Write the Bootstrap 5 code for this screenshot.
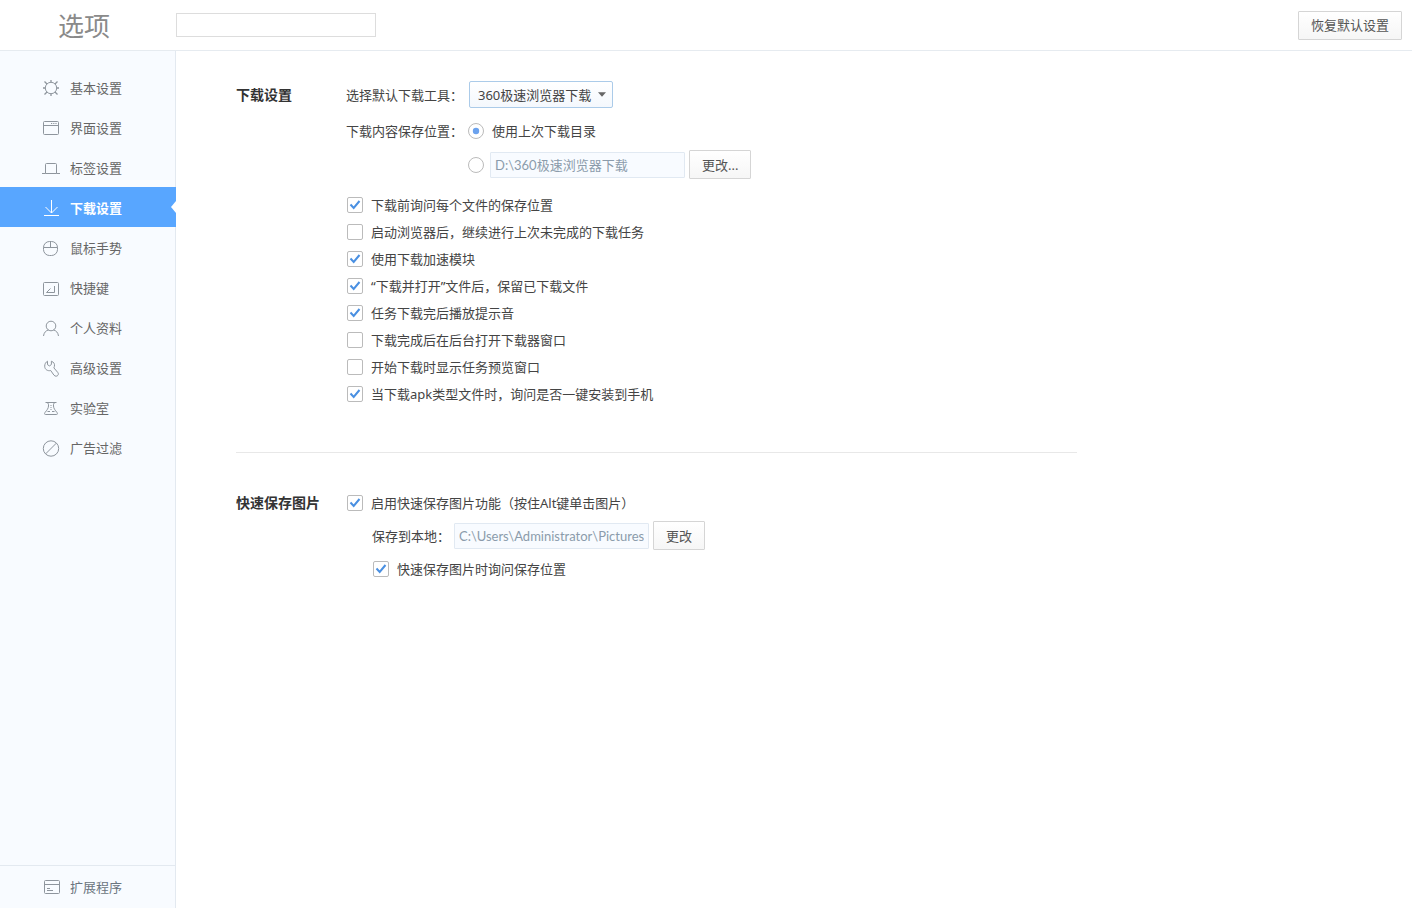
<!DOCTYPE html>
<html lang="zh-CN">
<head>
<meta charset="utf-8">
<meta name="viewport" content="width=device-width, initial-scale=1">
<title>选项</title>
<link href="https://cdn.jsdelivr.net/npm/bootstrap@5.3.0/dist/css/bootstrap.min.css" rel="stylesheet">
<style>
  body {
    font-family: "Noto Sans", "Noto Sans CJK SC", sans-serif;
    font-size: 13px;
    line-height: 20px;
    color: #444;
    background: #fff;
  }
  .top-bar { height: 51px; border-bottom: 1px solid #e6ebf0; padding-right: 10px; }
  .page-title { width: 176px; padding: 2px 0 0 58px; font-size: 26px; line-height: 40px; font-weight: 400; color: #8a8a8a; }
  .search-box { width: 200px; height: 24px; border: 1px solid #ddd; border-radius: 0; padding: 0 5px; font-size: 13px; }

  .side-bar { width: 176px; background: #f8fbff; border-right: 1px solid #e3e9f0; }
  .side-nav { padding-top: 16px; }
  .side-nav .nav-link, .side-foot .nav-link {
    display: flex; align-items: center; gap: 10px;
    height: 40px; padding: 2px 0 0 42px; color: #666; position: relative;
  }
  .side-nav .nav-link.active { background: #58a6ff; color: #fff; font-weight: 700; margin-right: -1px; }
  .side-nav .nav-link.active::after {
    content: ""; position: absolute; right: 0; top: 14px;
    border: 6px solid transparent; border-left-width: 0; border-right: 5px solid #fff;
  }
  .side-nav svg, .side-foot svg { width: 18px; height: 18px; fill: none; stroke: #8e959d; flex: none; }
  .side-nav .active svg { stroke: #fff; }
  .side-foot { border-top: 1px solid #e3e9f0; padding-bottom: 2px; }
  .side-foot .nav-link { color: #6b7580; }

  .settings { padding: 30px 24px 30px 60px; }
  .settings-inner { max-width: 841px; }
  .sect-title { width: 110px; font-size: 14px; line-height: 27px; font-weight: 700; margin: 0; color: #333; }
  .row-label { width: 123px; }
  .dir-line { line-height: 22px; }
  .split { border-top: 1px solid #e8e8e8; margin: 45px 0 36px; }

  .btn-plain {
    --bs-btn-color: #555; --bs-btn-border-color: #d5d5d5; --bs-btn-border-radius: 1px;
    --bs-btn-font-size: 13px; --bs-btn-line-height: 20px;
    --bs-btn-padding-x: 12px; --bs-btn-padding-y: 3px;
    --bs-btn-hover-border-color: #b5cfe8; --bs-btn-hover-color: #333;
    height: 29px; background: linear-gradient(#fff, #f6f6f6);
  }
  .tool-select {
    width: 144px; height: 27px; padding: 0 20px 0 8px;
    font-size: 13px; line-height: 20px; color: #444;
    border: 1px solid #abcbe9; border-radius: 2px;
    background: url("data:image/svg+xml,%3Csvg xmlns='http://www.w3.org/2000/svg' viewBox='0 0 9 5'%3E%3Cpath d='M0 0h9L4.500 5z' fill='%23666'/%3E%3C/svg%3E") right 6px center / 8px 5px no-repeat, linear-gradient(#fff, #f4f8fd);
  }
  .path-box {
    width: 195px; height: 26px; padding: 0 4px; font-size: 13px; line-height: 20px;
    font-family: Lato, "Noto Sans CJK SC", sans-serif;
    color: #8b9bab; border: 1px solid #e1e9f2; border-radius: 1px;
  }
  .path-box:disabled { background: #f8fbff; }

  .opt { display: flex; align-items: center; gap: 8px; min-height: 27px; padding: 0 0 0 1px; margin: 0; }
  .opt .form-check-input, .radio-line .form-check-input {
    width: 16px; height: 16px; margin: 0; float: none; flex: none;
    border: 1px solid #bbb; background-color: #fff;
  }
  .opt .form-check-input { border-radius: 2px; }
  .opt .form-check-input:checked {
    background-image: url("data:image/svg+xml,%3Csvg xmlns='http://www.w3.org/2000/svg' viewBox='0 0 14 14'%3E%3Cpath d='M2.500 6.500l3.200 3.500L11.500 3' fill='none' stroke='%234a90e2' stroke-width='2'/%3E%3C/svg%3E");
  }
  .radio-line .form-check-input:checked {
    background-image: url("data:image/svg+xml,%3Csvg xmlns='http://www.w3.org/2000/svg' viewBox='0 0 14 14'%3E%3Ccircle cx='7' cy='7' r='3.200' fill='%236ba2ee'/%3E%3C/svg%3E");
  }
  .radio-line { margin-left: -1px; }
  .fixed-dir { gap: 6px; }
  .indent { padding: 5px 0 0 26px; gap: 5px; }
</style>
</head>
<body>
<div class="d-flex flex-column min-vh-100">
  <header class="top-bar d-flex align-items-center">
    <h1 class="page-title m-0">选项</h1>
    <input type="search" class="form-control search-box" aria-label="搜索设置">
    <button type="button" class="btn btn-plain ms-auto">恢复默认设置</button>
  </header>

  <div class="d-flex flex-grow-1">
    <aside class="side-bar d-flex flex-column flex-shrink-0">
      <nav class="side-nav nav flex-column flex-nowrap flex-grow-1">
        <a class="nav-link" href="#basic"><svg viewBox="0 0 18 18"><circle cx="9" cy="9" r="5.700"/><path d="M9 1v2.300M9 14.700V17M1 9h2.300M14.700 9H17M2.500 2.500l2.500 2.500M13 13l2.500 2.500M15.500 2.500L13 5M5 13l-2.500 2.500" stroke-width="1.300"/></svg>基本设置</a>
        <a class="nav-link" href="#ui"><svg viewBox="0 0 18 18"><rect x="1.500" y="2.500" width="15" height="13" rx="1"/><path d="M1.500 6.500h15M9 4.500h1.200M11.200 4.500h1.200M13.400 4.500h1.200"/></svg>界面设置</a>
        <a class="nav-link" href="#tabs"><svg viewBox="0 0 18 18"><path d="M0 14.500h3.500v-9a1 1 0 0 1 1-1h9a1 1 0 0 1 1 1v9H18M3.500 14.500h11"/></svg>标签设置</a>
        <a class="nav-link active" href="#download" aria-current="page"><svg viewBox="0 0 18 18"><path d="M9.500 1v13M3.500 8l6 6 6-6M2 16.500h15"/></svg>下载设置</a>
        <a class="nav-link" href="#mouse"><svg viewBox="0 0 18 18"><rect x="1.500" y="2.500" width="14" height="14" rx="6"/><path d="M1.500 8.500h14M8.500 2.500v6"/></svg>鼠标手势</a>
        <a class="nav-link" href="#keys"><svg viewBox="0 0 18 18"><rect x="1.500" y="3.500" width="15" height="13" rx="1"/><path d="M12.500 7v6.500h-8l4-4"/></svg>快捷键</a>
        <a class="nav-link" href="#profile"><svg viewBox="0 0 18 18"><circle cx="9" cy="7" r="4.800"/><path d="M1.500 17c.4-3.400 2.500-5.600 5-6M16.500 17c-.4-3.400-2.500-5.600-5-6"/></svg>个人资料</a>
        <a class="nav-link" href="#advanced"><svg viewBox="0 0 18 18"><path d="M5.500 2.200v3.500l2 1.200 1.900-1.400V2.200c2.300.8 3.600 2.800 3 5.200l-.5 1.500 3.900 4.600c2 2.700-1.800 5.200-3.900 2.600L8.700 11.500c-2.700.8-6-.8-6-4.300 0-2.100 1-4.100 2.800-5z"/></svg>高级设置</a>
        <a class="nav-link" href="#lab"><svg viewBox="0 0 18 18"><path d="M3.500 3.500h11M5 3.500c1.500.8 1.600 1.500 1.500 3.500-.1 2.500-1.500 4-3.500 6.500-.8 1.500-.5 2 .5 2h11c1 0 1.300-.5.500-2-2-2.500-3.400-4-3.500-6.500-.1-2 0-2.700 1.500-3.500M5.500 12.500h2.500M10 12.500h2.500"/><path d="M8.500 6.500h1M8.500 8.500h1M8.500 10.500h1"/></svg>实验室</a>
        <a class="nav-link" href="#adblock"><svg viewBox="0 0 18 18"><circle cx="9" cy="9.500" r="7.700"/><path d="M14.400 4.100L3.600 14.900"/></svg>广告过滤</a>
      </nav>
      <div class="side-foot">
        <a class="nav-link" href="#extensions"><svg viewBox="0 0 18 18"><rect x="2.500" y="2.500" width="15" height="13" rx="1"/><path d="M2.500 6.500h15M5 10.500h3M5 12.500h6"/></svg>扩展程序</a>
      </div>
    </aside>

    <main class="settings flex-grow-1">
      <div class="settings-inner">
        <section class="d-flex">
          <h2 class="sect-title flex-shrink-0">下载设置</h2>
          <div>
            <div class="d-flex align-items-center">
              <label class="row-label" for="tool">选择默认下载工具：</label>
              <select id="tool" class="form-select tool-select"><option>360极速浏览器下载</option></select>
            </div>
            <div class="d-flex mt-2 pt-1 dir-line">
              <div class="row-label" id="dir-label">下载内容保存位置：</div>
              <div class="radio-line" role="radiogroup" aria-labelledby="dir-label">
                <div class="d-flex align-items-center gap-2 mb-2">
                  <input class="form-check-input" type="radio" name="dir" id="dir-last" checked>
                  <label for="dir-last">使用上次下载目录</label>
                </div>
                <div class="d-flex align-items-center fixed-dir">
                  <input class="form-check-input" type="radio" name="dir" id="dir-fixed" aria-label="固定目录">
                  <div class="d-flex align-items-center gap-1">
                    <input type="text" class="form-control path-box" value="D:\360极速浏览器下载" aria-label="下载目录" disabled>
                    <button type="button" class="btn btn-plain">更改...</button>
                  </div>
                </div>
              </div>
            </div>
            <div class="mt-2 pt-1">
              <div class="opt"><input class="form-check-input" type="checkbox" id="c1" checked><label for="c1">下载前询问每个文件的保存位置</label></div>
              <div class="opt"><input class="form-check-input" type="checkbox" id="c2"><label for="c2">启动浏览器后，继续进行上次未完成的下载任务</label></div>
              <div class="opt"><input class="form-check-input" type="checkbox" id="c3" checked><label for="c3">使用下载加速模块</label></div>
              <div class="opt"><input class="form-check-input" type="checkbox" id="c4" checked><label for="c4">“下载并打开”文件后，保留已下载文件</label></div>
              <div class="opt"><input class="form-check-input" type="checkbox" id="c5" checked><label for="c5">任务下载完后播放提示音</label></div>
              <div class="opt"><input class="form-check-input" type="checkbox" id="c6"><label for="c6">下载完成后在后台打开下载器窗口</label></div>
              <div class="opt"><input class="form-check-input" type="checkbox" id="c7"><label for="c7">开始下载时显示任务预览窗口</label></div>
              <div class="opt"><input class="form-check-input" type="checkbox" id="c8" checked><label for="c8">当下载apk类型文件时，询问是否一键安装到手机</label></div>
            </div>
          </div>
        </section>

        <div class="split"></div>

        <section class="d-flex">
          <h2 class="sect-title flex-shrink-0">快速保存图片</h2>
          <div>
            <div class="opt"><input class="form-check-input" type="checkbox" id="q1" checked><label for="q1">启用快速保存图片功能（按住Alt键单击图片）</label></div>
            <div class="indent d-flex flex-column">
              <div class="d-flex align-items-center gap-1">
                <label for="pic-dir">保存到本地：</label>
                <input type="text" id="pic-dir" class="form-control path-box" value="C:\Users\Administrator\Pictures" disabled>
                <button type="button" class="btn btn-plain">更改</button>
              </div>
              <div class="opt"><input class="form-check-input" type="checkbox" id="q2" checked><label for="q2">快速保存图片时询问保存位置</label></div>
            </div>
          </div>
        </section>
      </div>
    </main>
  </div>
</div>
<script src="https://cdn.jsdelivr.net/npm/bootstrap@5.3.0/dist/js/bootstrap.bundle.min.js"></script>
</body>
</html>
